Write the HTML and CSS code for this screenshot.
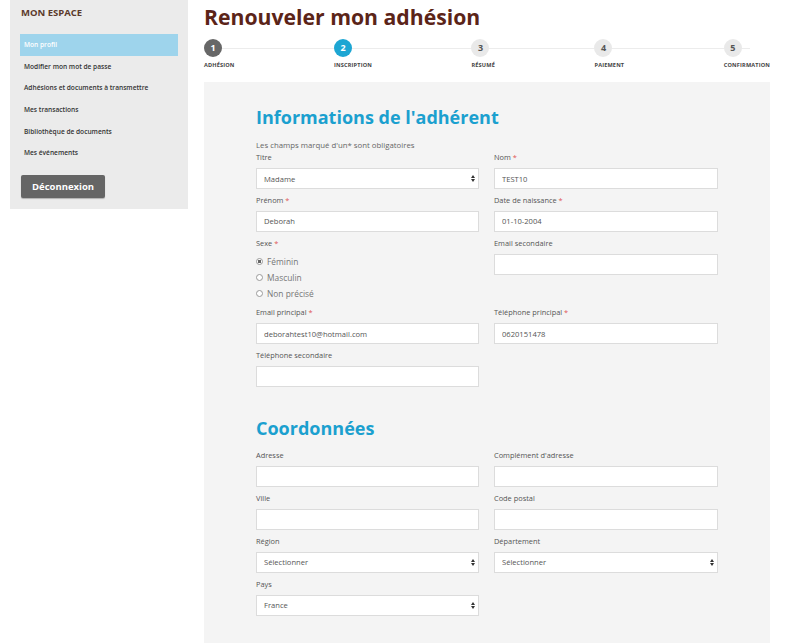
FILE: index.html
```html
<!DOCTYPE html>
<html lang="fr">
<head>
  <meta charset="UTF-8">
  <meta name="viewport" content="width=device-width, initial-scale=1.0">
  <title>Renouveler mon adhésion</title>
  <link rel="stylesheet" href="styles.css">
</head>
<body>
  <div class="page">
    <aside class="sidebar">
      <h3 class="sidebar-title">MON ESPACE</h3>
      <ul class="menu">
        <li class="active">Mon profil</li>
        <li>Modifier mon mot de passe</li>
        <li>Adhésions et documents à transmettre</li>
        <li>Mes transactions</li>
        <li>Bibliothèque de documents</li>
        <li>Mes événements</li>
      </ul>
      <button class="logout">Déconnexion</button>
    </aside>

    <main class="main">
      <h1 class="title">Renouveler mon adhésion</h1>

      <ol class="steps">
        <li class="step done"><span class="num">1</span><span class="label">Adhésion</span></li>
        <li class="step current"><span class="num">2</span><span class="label">Inscription</span></li>
        <li class="step"><span class="num">3</span><span class="label">Résumé</span></li>
        <li class="step"><span class="num">4</span><span class="label">Paiement</span></li>
        <li class="step"><span class="num">5</span><span class="label">Confirmation</span></li>
      </ol>

      <section class="panel">
        <h2>Informations de l'adhérent</h2>
        <p class="note">Les champs marqué d'un* sont obligatoires</p>

        <div class="form-grid">
          <div class="field">
            <label>Titre</label>
            <div class="select"><select><option>Madame</option></select></div>
          </div>
          <div class="field">
            <label>Nom <span class="req">*</span></label>
            <input type="text" value="TEST10">
          </div>

          <div class="field">
            <label>Prénom <span class="req">*</span></label>
            <input type="text" value="Deborah">
          </div>
          <div class="field">
            <label>Date de naissance <span class="req">*</span></label>
            <input type="text" value="01-10-2004">
          </div>

          <div class="field">
            <label>Sexe <span class="req">*</span></label>
            <div class="radios">
              <label class="radio"><input type="radio" name="sexe" checked> Féminin</label>
              <label class="radio"><input type="radio" name="sexe"> Masculin</label>
              <label class="radio"><input type="radio" name="sexe"> Non précisé</label>
            </div>
          </div>
          <div class="field">
            <label>Email secondaire</label>
            <input type="text" value="">
          </div>

          <div class="field">
            <label>Email principal <span class="req">*</span></label>
            <input type="text" value="deborahtest10@hotmail.com">
          </div>
          <div class="field">
            <label>Téléphone principal <span class="req">*</span></label>
            <input type="text" value="0620151478">
          </div>

          <div class="field">
            <label>Téléphone secondaire</label>
            <input type="text" value="">
          </div>
        </div>

        <h2 class="section-title">Coordonnées</h2>

        <div class="form-grid">
          <div class="field">
            <label>Adresse</label>
            <input type="text" value="">
          </div>
          <div class="field">
            <label>Complément d'adresse</label>
            <input type="text" value="">
          </div>

          <div class="field">
            <label>Ville</label>
            <input type="text" value="">
          </div>
          <div class="field">
            <label>Code postal</label>
            <input type="text" value="">
          </div>

          <div class="field">
            <label>Région</label>
            <div class="select"><select><option>Sélectionner</option></select></div>
          </div>
          <div class="field">
            <label>Département</label>
            <div class="select"><select><option>Sélectionner</option></select></div>
          </div>

          <div class="field">
            <label>Pays</label>
            <div class="select"><select><option>France</option></select></div>
          </div>
        </div>
      </section>
    </main>
  </div>
</body>
</html>
```

FILE: styles.css
```css
body {
  margin: 0;
  padding: 0;
  background: #fff;
  font-family: 'Open Sans', 'Liberation Sans', sans-serif;
  color: #444;
  overflow: hidden;
}

.page {
  display: flex;
  align-items: flex-start;
  gap: 16px;
  padding-left: 10px;
}

/* Sidebar */
.sidebar {
  width: 178px;
  flex: 0 0 178px;
  background: #ebebeb;
  padding: 6px 10px 11px;
  box-sizing: border-box;
}

.sidebar-title {
  margin: 0 0 0 1px;
  font-size: 9.5px;
  line-height: 14px;
  font-weight: 700;
  color: #5b3a2c;
}

.menu {
  list-style: none;
  margin: 14px 0 0;
  padding: 0;
}

.menu li {
  height: 21.7px;
  line-height: 21.7px;
  padding: 0 4px;
  font-size: 6.6px;
  font-weight: 600;
  color: #333;
  white-space: nowrap;
}

.menu li.active {
  background: #9ed4ec;
  color: #fff;
}

.logout {
  margin: 11px 0 0 1px;
  width: 84px;
  height: 23px;
  border: none;
  border-radius: 2px;
  background: #656565;
  color: #fff;
  font-family: inherit;
  font-size: 9.5px;
  font-weight: 700;
  box-shadow: 0 1px 1px rgba(0, 0, 0, 0.25);
}

/* Main */
.main {
  width: 566px;
  flex: 0 0 566px;
}

.title {
  margin: 3px 0 0;
  font-size: 21.2px;
  line-height: 28px;
  font-weight: 700;
  color: #5b2418;
}

.steps {
  list-style: none;
  margin: 8px 0 0;
  padding: 0;
  display: flex;
  justify-content: space-between;
  position: relative;
  height: 43px;
}

.steps::before {
  content: "";
  position: absolute;
  left: 9px;
  right: 20px;
  top: 9px;
  height: 1px;
  background: #ececec;
}

.step {
  display: flex;
  flex-direction: column;
  align-items: flex-start;
  position: relative;
}

.step .num {
  width: 18px;
  height: 18px;
  border-radius: 50%;
  background: #e9e9e9;
  color: #555;
  font-size: 9px;
  font-weight: 700;
  line-height: 18px;
  text-align: center;
}

.step.done .num {
  background: #676767;
  color: #fff;
}

.step.current .num {
  background: #1da6d3;
  color: #fff;
}

.step .label {
  margin-top: 4px;
  font-size: 5.6px;
  font-weight: 700;
  text-transform: uppercase;
  letter-spacing: 0.15px;
  color: #444;
}

/* Panel */
.panel {
  background: #f4f4f4;
  padding: 24px 52px 28px;
}

.panel h2 {
  margin: 0;
  font-size: 18px;
  line-height: 22px;
  font-weight: 700;
  color: #1ba0cf;
}

.panel .section-title {
  margin: 30px 0 10px;
}

.note {
  margin: 11px 0 0;
  font-size: 7.8px;
  line-height: 12px;
  color: #666;
}

.form-grid {
  display: grid;
  grid-template-columns: 223px 224px;
  column-gap: 15px;
  row-gap: 4.8px;
  align-items: start;
}

.field > label {
  display: block;
  font-size: 7.4px;
  line-height: 12px;
  color: #555;
  margin-bottom: 5px;
}

.req {
  color: #e05656;
}

.field input[type="text"],
.field select {
  display: block;
  width: 100%;
  height: 21px;
  box-sizing: border-box;
  border: 1px solid #dcdcdc;
  background: #fff;
  padding: 0 7px;
  font-family: inherit;
  font-size: 7.6px;
  color: #555;
  border-radius: 0;
  outline: none;
}

.select {
  position: relative;
}

.field select {
  appearance: none;
  -webkit-appearance: none;
}

.select::before,
.select::after {
  content: "";
  position: absolute;
  right: 4px;
  width: 0;
  height: 0;
  border-left: 2.5px solid transparent;
  border-right: 2.5px solid transparent;
  pointer-events: none;
}

.select::before {
  top: 7px;
  border-bottom: 3px solid #333;
}

.select::after {
  top: 11px;
  border-top: 3px solid #333;
}

.radios {
  margin-top: 1px;
}

.radio {
  display: flex;
  align-items: center;
  height: 16px;
  font-size: 8.4px;
  color: #777;
}

.radio input {
  appearance: none;
  -webkit-appearance: none;
  width: 7px;
  height: 7px;
  margin: 0 4px 0 0;
  border: 1px solid #9a9a9a;
  border-radius: 50%;
  background: #fff;
  box-sizing: border-box;
}

.radio input:checked {
  background: radial-gradient(circle, #666 0 1.6px, #fff 2px);
}
```
